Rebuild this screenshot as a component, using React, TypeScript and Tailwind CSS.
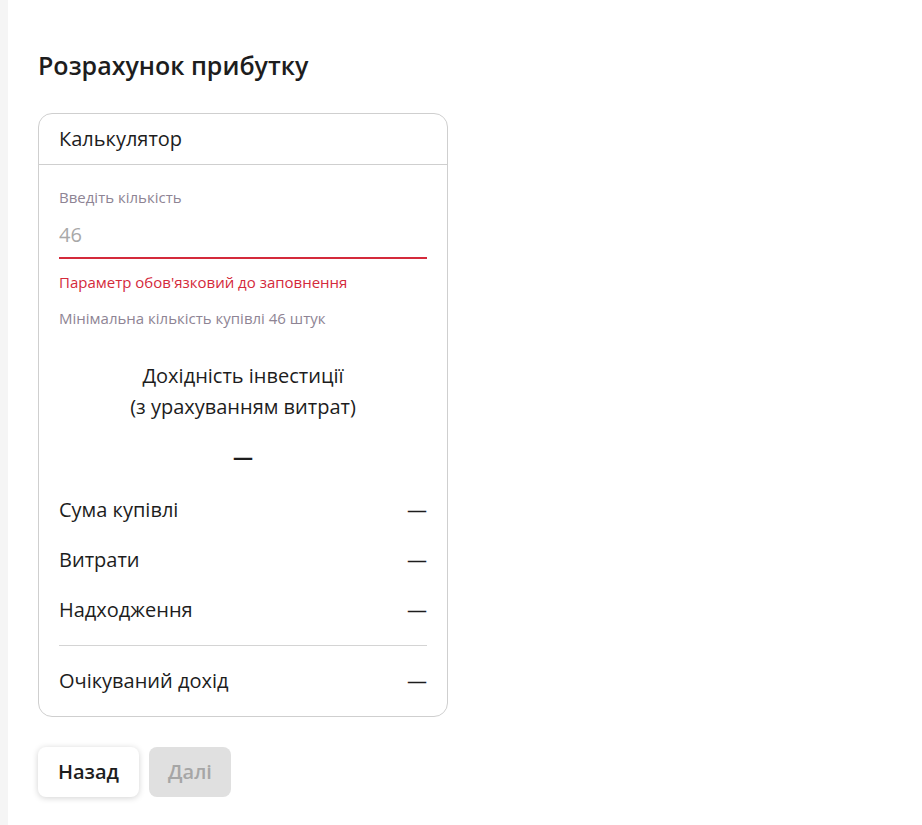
import React from "react";

const rows = ["Сума купівлі", "Витрати", "Надходження"];

const App = () => {
  return (
    <div
      className="flex min-h-screen bg-white text-[#1d1d1d]"
      style={{ fontFamily: '"Open Sans", sans-serif' }}
    >
      <div className="w-2 shrink-0 bg-[#f5f5f5]" />
      <div className="flex flex-col pl-[30px] pt-[49px]">
        <h1 className="text-[25px] leading-8 font-semibold">Розрахунок прибутку</h1>

        <div className="mt-[32px] w-[410px] rounded-[14px] border border-[#cfcfcf]">
          <div className="border-b border-[#cfcfcf] px-5 py-[11px] text-[20px] leading-7">
            Калькулятор
          </div>
          <div className="flex flex-col px-5 pt-[22px] pb-[21px]">
            <label className="text-[15px] leading-5 text-[#8e8494]">Введіть кількість</label>
            <input
              className="mt-[14px] border-b-2 border-[#d42a3b] pb-[8px] text-[20px] leading-7 text-[#9e9e9e] placeholder:text-[#a8a8a8] outline-none"
              placeholder="46"
            />
            <p className="mt-[13px] text-[15px] leading-5 text-[#d42a3b]">
              Параметр обов'язковий до заповнення
            </p>
            <p className="mt-4 text-[15px] leading-5 text-[#8e8494]">
              Мінімальна кількість купівлі 46 штук
            </p>
            <p className="mt-8 text-center text-[20px] leading-[31px]">
              Дохідність інвестиції
              <br />
              (з урахуванням витрат)
            </p>
            <p className="mt-[21px] text-center text-[20px] leading-7 font-bold">—</p>
            <div className="mt-[25px] flex flex-col gap-[22px]">
              {rows.map((r) => (
                <div key={r} className="flex justify-between text-[20px] leading-7">
                  <span>{r}</span>
                  <span>—</span>
                </div>
              ))}
            </div>
            <div className="mt-[21px] h-px bg-[#d4d4d4]" />
            <div className="mt-[21px] flex justify-between text-[20px] leading-7">
              <span>Очікуваний дохід</span>
              <span>—</span>
            </div>
          </div>
        </div>

        <div className="mt-[30px] flex gap-[10px]">
          <button className="h-[50px] w-[101px] rounded-lg bg-white text-[20px] font-semibold shadow-[0_1px_6px_rgba(0,0,0,0.18)]">
            Назад
          </button>
          <button
            disabled
            className="h-[50px] w-[82px] rounded-lg bg-[#e0e0e0] text-[20px] font-semibold text-[#a6a6a6]"
          >
            Далі
          </button>
        </div>
      </div>
    </div>
  );
};

export default App;
